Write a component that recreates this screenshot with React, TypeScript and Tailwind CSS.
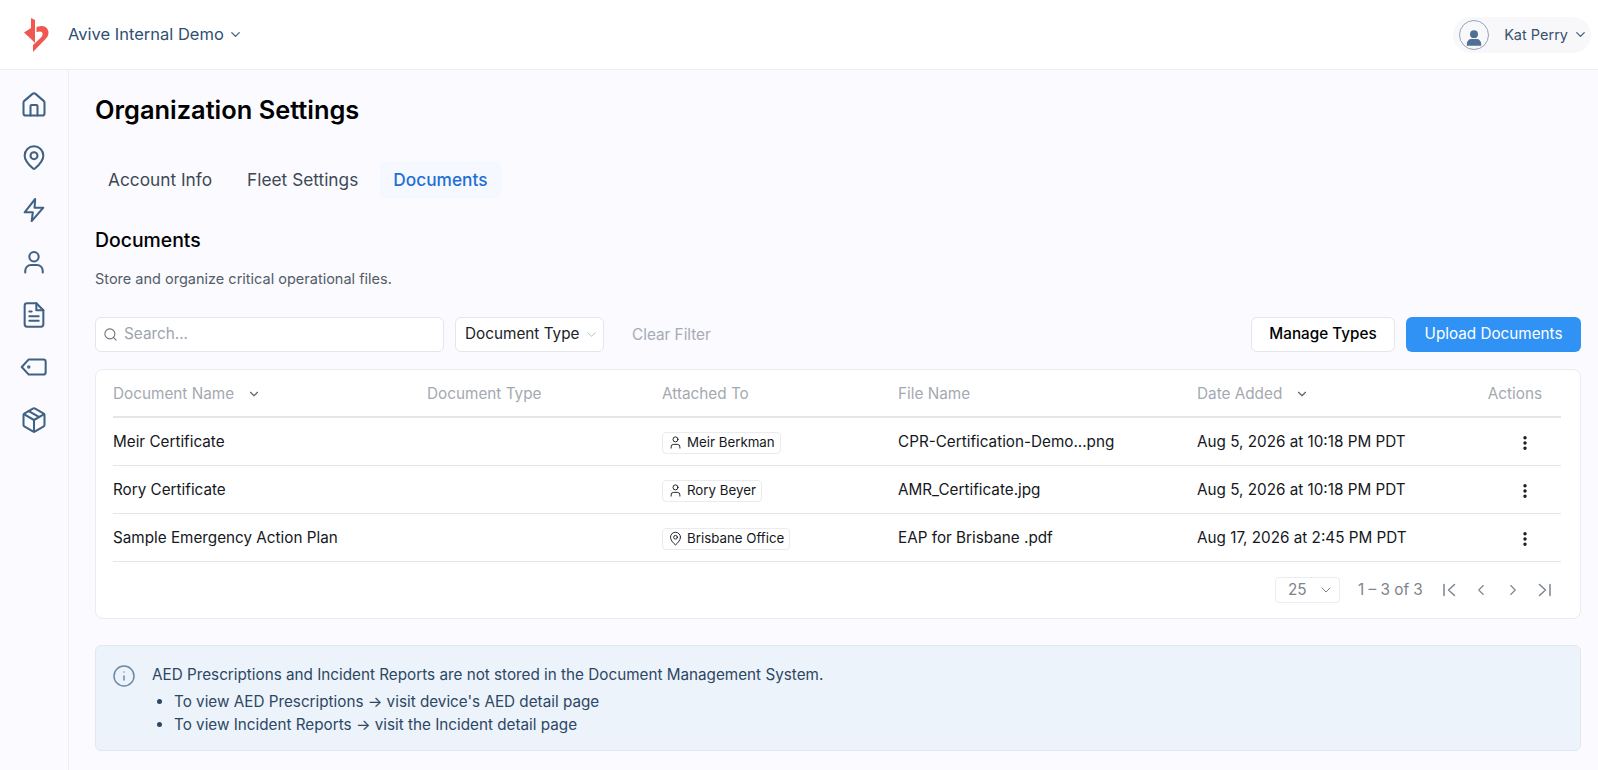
import { ChevronDown, ChevronLeft, ChevronRight, EllipsisVertical, Info, MapPin, Search, User } from "lucide-react";
import type { ReactNode } from "react";

function Icon({ children, size = 28, sw = 1.75 }: { children: ReactNode; size?: number; sw?: number }) {
  return (
    <svg width={size} height={size} viewBox="0 0 24 24" fill="none" stroke="currentColor" strokeWidth={sw} strokeLinecap="round" strokeLinejoin="round">
      {children}
    </svg>
  );
}

const navIcons: ReactNode[] = [
  <>
    <path d="M15 21v-8a1 1 0 0 0-1-1h-4a1 1 0 0 0-1 1v8" />
    <path d="M3 10a2 2 0 0 1 .709-1.528l7-5.999a2 2 0 0 1 2.582 0l7 5.999A2 2 0 0 1 21 10v9a2 2 0 0 1-2 2H5a2 2 0 0 1-2-2z" />
  </>,
  <>
    <path d="M20 10c0 5-5.5 9.5-7.4 11.2a1 1 0 0 1-1.2 0C9.5 19.5 4 15 4 10a8 8 0 0 1 16 0" />
    <circle cx="12" cy="10" r="3" />
  </>,
  <path d="M13 2.5 4 14h7l-1 7.5L20 10h-7.5z" />,
  <>
    <circle cx="12" cy="7.5" r="4" />
    <path d="M4.5 21v-1.5a5 5 0 0 1 5-5h5a5 5 0 0 1 5 5V21" />
  </>,
  <>
    <path d="M14 2H6a2 2 0 0 0-2 2v16a2 2 0 0 0 2 2h12a2 2 0 0 0 2-2V8z" />
    <path d="M14 2v6h6" />
    <path d="M8 13h8M8 17h8M8 9h2" />
  </>,
  <>
    <path d="M7.5 5.5H20a2 2 0 0 1 2 2v9a2 2 0 0 1-2 2H7.5L1.5 12z" />
    <circle cx="7.5" cy="12" r="0.6" />
  </>,
  <>
    <path d="M21 8a2 2 0 0 0-1-1.73l-7-4a2 2 0 0 0-2 0l-7 4A2 2 0 0 0 3 8v8a2 2 0 0 0 1 1.73l7 4a2 2 0 0 0 2 0l7-4A2 2 0 0 0 21 16Z" />
    <path d="m3.3 7 8.7 5 8.7-5M12 22V12M7.5 4.3l9 5.2" />
  </>,
];

const rows = [
  { name: "Meir Certificate", who: "Meir Berkman", place: false, file: "CPR-Certification-Demo...png", date: "Aug 5, 2026 at 10:18 PM PDT" },
  { name: "Rory Certificate", who: "Rory Beyer", place: false, file: "AMR_Certificate.jpg", date: "Aug 5, 2026 at 10:18 PM PDT" },
  { name: "Sample Emergency Action Plan", who: "Brisbane Office", place: true, file: "EAP for Brisbane .pdf", date: "Aug 17, 2026 at 2:45 PM PDT" },
];

const cols = "grid grid-cols-[314px_235px_236px_299px_1fr] items-center";

export default function App() {
  return (
    <div className="h-screen overflow-hidden bg-[#fafaff] font-['Inter',sans-serif] text-black">
      <header className="flex h-[70px] items-center justify-between border-b border-[#eceef2] bg-white pl-[23px] pr-[7px]">
        <div className="flex items-center">
          <svg width="26" height="34" viewBox="0 0 26 34" className="fill-[#f0574f]">
            <path d="M8 0 12 2V25L8 21 1 14.5 8 10z" />
            <path d="M13.5 9 18 8C22.5 7.5 25.5 11 25.5 14.5 25.5 17 24.5 19 22.5 21L10 34 10 27 18 19.5C20.5 17 20 13.5 17 13.5L13.5 14z" />
          </svg>
          <span className="ml-[19px] text-[16.5px] font-normal text-[#2f4f73]">Avive Internal Demo</span>
          <ChevronDown size={15} strokeWidth={2} className="ml-[4px] text-[#3f5f80]" />
        </div>
        <div className="flex h-[36px] items-center rounded-full bg-[#f8f8fb] pl-[6px] pr-[3px]">
          <span className="flex h-[30px] w-[30px] items-end justify-center overflow-hidden rounded-full border-[1.5px] border-[#93a5ba]">
            <svg width="20" height="22" viewBox="0 0 18 20" className="fill-[#4f6f94]">
              <circle cx="9" cy="6.5" r="3.6" />
              <path d="M2.5 17v-2a4 4 0 0 1 4-4h5a4 4 0 0 1 4 4v2z" />
            </svg>
          </span>
          <span className="ml-[15px] text-[14.5px] font-normal text-[#38526f]">Kat Perry</span>
          <ChevronDown size={15} strokeWidth={2} className="ml-[5px] text-[#3f5f80]" />
        </div>
      </header>

      <div className="flex h-[700px]">
        <aside className="w-[69px] shrink-0 border-r border-[#eceef2] py-[9px]">
          {navIcons.map((icon, i) => (
            <div key={i} className="flex h-[52.4px] items-center justify-center pr-[1px] text-[#3f6183]">
              <Icon>{icon}</Icon>
            </div>
          ))}
        </aside>

        <main className="flex-1 pl-[26px] pr-[17px] pt-[24px]">
          <h1 className="text-[25.4px] font-semibold leading-[32px]">Organization Settings</h1>

          <div className="mt-[35px] flex gap-[9px] text-[17.3px]">
            <span className="flex h-[38px] items-center px-[13px] text-[#3d4854]">Account Info</span>
            <span className="flex h-[38px] items-center px-[13px] text-[#3d4854]">Fleet Settings</span>
            <span className="flex h-[38px] items-center rounded-md bg-[#f5f8fe] px-[13px] font-medium text-[#1f6fd6]">Documents</span>
          </div>

          <h2 className="mt-[29px] text-[19.4px] font-[450] leading-[24px]">Documents</h2>
          <p className="mt-[17px] text-[14.5px] leading-[20px] text-[#545d68]">Store and organize critical operational files.</p>

          <div className="mt-[28px] flex h-[35px] items-stretch text-[15.3px]">
            <div className="flex w-[349px] items-center rounded-md border border-[#e4e6ec] bg-white pl-[7px]">
              <Search size={15} strokeWidth={1.75} className="text-[#6b7480]" />
              <span className="ml-[6px] text-[#9ea4ad]">Search...</span>
            </div>
            <div className="ml-[11px] flex w-[149px] items-center justify-between rounded-md border border-[#e4e6ec] bg-white pl-[9px] pr-[4px] text-[#1d2228]">
              <span>Document Type</span>
              <ChevronDown size={15} strokeWidth={1.25} className="text-[#a9aeb6]" />
            </div>
            <span className="ml-[28px] flex items-center pt-[1px] text-[15.3px] font-normal text-[#a6abb3]">Clear Filter</span>
            <div className="ml-auto flex gap-[11px] text-[15.25px] font-medium">
              <button className="w-[144px] rounded-md border border-[#e4e6ec] bg-white text-black">Manage Types</button>
              <button className="w-[175px] rounded-md bg-[#3092f5] font-normal text-white">Upload Documents</button>
            </div>
          </div>

          <section className="mt-[17px] h-[250px] rounded-lg border border-[#eaecf1] bg-white pl-[17px] pr-[19px] text-[15.25px]">
            <div className={`${cols} h-[48px] border-b-2 border-[#e3e5e9] pt-[2px] font-normal text-[15.3px] text-[#a4a9b1]`}>
              <span className="flex items-center">
                Document Name
                <ChevronDown size={14} strokeWidth={2} className="ml-[13px] text-[#5b6570]" />
              </span>
              <span>Document Type</span>
              <span>Attached To</span>
              <span>File Name</span>
              <div className="flex items-center justify-between pr-[19px]">
                <span className="flex items-center">
                  Date Added
                  <ChevronDown size={14} strokeWidth={2} className="ml-[13px] text-[#5b6570]" />
                </span>
                <span>Actions</span>
              </div>
            </div>
            {rows.map((row) => (
              <div key={row.name} className={`${cols} h-[48px] border-b border-[#e3e5e9] pt-[2px] text-[#15181c]`}>
                <span>{row.name}</span>
                <span />
                <span className="flex">
                  <span className="inline-flex h-[22px] items-center gap-[4px] rounded-[4px] border border-[#e9ebef] px-[5px] text-[13.3px] font-normal">
                    {row.place ? <MapPin size={15} strokeWidth={1.5} /> : <User size={15} strokeWidth={1.5} />}
                    {row.who}
                  </span>
                </span>
                <span>{row.file}</span>
                <div className="flex items-center justify-between pr-[27px]">
                  <span>{row.date}</span>
                  <EllipsisVertical size={18} strokeWidth={2.5} />
                </div>
              </div>
            ))}
            <div className="flex h-[55px] items-center justify-end pr-[8px] pt-[1px] text-[#7d848d]">
              <div className="flex h-[26px] w-[65px] items-center justify-between rounded-[4px] border border-[#eaecf0] pl-[12px] pr-[5px] text-[15.3px]">
                25
                <ChevronDown size={16} strokeWidth={1.5} />
              </div>
              <span className="ml-[18px] w-[65px] whitespace-nowrap text-[15.3px]">1 – 3 of 3</span>
              <div className="ml-[18px] flex w-[112px] items-center justify-between">
                <span className="flex w-[18px] items-center justify-center">
                  <svg width="18" height="18" viewBox="0 0 18 18" fill="none" stroke="currentColor" strokeWidth="1.5" strokeLinecap="round" strokeLinejoin="round"><path d="M3 3.5v11M13.5 3.5 7.5 9l6 5.5" /></svg>
                </span>
                <ChevronLeft size={18} strokeWidth={1.5} />
                <ChevronRight size={18} strokeWidth={1.5} />
                <span className="flex w-[18px] items-center justify-center">
                  <svg width="18" height="18" viewBox="0 0 18 18" fill="none" stroke="currentColor" strokeWidth="1.5" strokeLinecap="round" strokeLinejoin="round"><path d="M15 3.5v11M4.5 3.5l6 5.5-6 5.5" /></svg>
                </span>
              </div>
            </div>
          </section>

          <section className="mt-[26px] flex h-[106px] rounded-md border border-[#e1e8f1] bg-[#edf3fb] pl-[16px] pt-[17px] text-[15.25px] leading-[23px] text-[#2c4763]">
            <Info size={24} strokeWidth={1.5} className="mt-[1px] shrink-0 text-[#6b8aa8]" />
            <div className="ml-[16px]">
              <p className="mb-[4px]">AED Prescriptions and Incident Reports are not stored in the Document Management System.</p>
              <ul className="ml-[22px] list-disc">
                <li>To view AED Prescriptions → visit device's AED detail page</li>
                <li>To view Incident Reports → visit the Incident detail page</li>
              </ul>
            </div>
          </section>
        </main>
      </div>
    </div>
  );
}
